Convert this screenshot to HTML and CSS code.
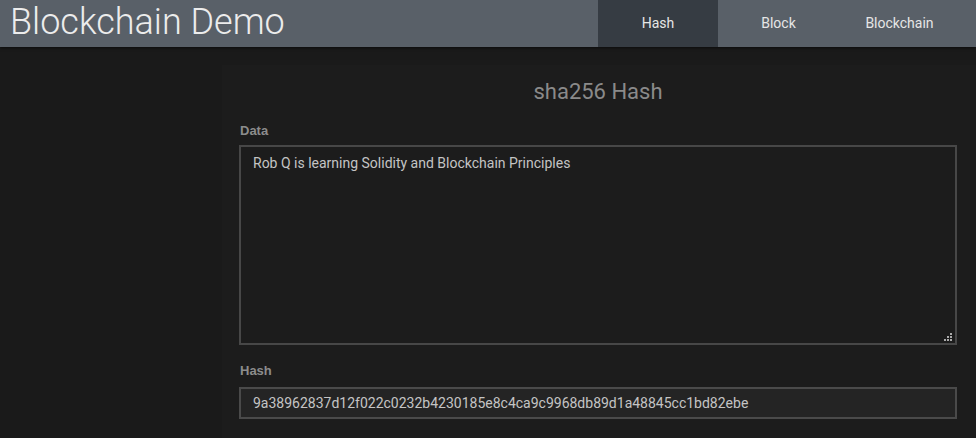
FILE: index.html
```html
<!DOCTYPE html>
<html>
<head>
<meta charset="utf-8">
<title>Blockchain Demo</title>
<link rel="stylesheet" href="styles.css">
</head>
<body>
<header class="topbar">
  <h1 class="brand">Blockchain Demo</h1>
  <nav class="nav">
    <a class="nav-item active">Hash</a>
    <a class="nav-item">Block</a>
    <a class="nav-item">Blockchain</a>
  </nav>
</header>
<main class="page">
  <div class="spacer"></div>
  <section class="card">
    <h2 class="card-title">sha256 Hash</h2>
    <label class="field-label">Data</label>
    <div class="textarea">Rob Q is learning Solidity and Blockchain Principles<span class="grip"><svg width="8" height="8" viewBox="0 0 8 8"><rect x="6" y="0" width="2" height="2" fill="#aaa"/><rect x="3" y="3" width="2" height="2" fill="#aaa"/><rect x="6" y="3" width="2" height="2" fill="#aaa"/><rect x="0" y="6" width="2" height="2" fill="#aaa"/><rect x="3" y="6" width="2" height="2" fill="#aaa"/><rect x="6" y="6" width="2" height="2" fill="#aaa"/></svg></span></div>
    <label class="field-label hash-label">Hash</label>
    <div class="input">9a38962837d12f022c0232b4230185e8c4ca9c9968db89d1a48845cc1bd82ebe</div>
  </section>
</main>
</body>
</html>
```
FILE: styles.css
```css
html, body {
  margin: 0;
  padding: 0;
  background: #1a1a1a;
  font-family: Roboto, "Liberation Sans", sans-serif;
  height: 100%;
  overflow: hidden;
}
.topbar {
  display: flex;
  align-items: stretch;
  height: 47px;
  background: #596068;
  box-shadow: 0 1px 3px rgba(0,0,0,0.6);
  position: relative;
}
.brand {
  margin: 0;
  padding-left: 10px;
  font-weight: 300;
  font-size: 36px;
  line-height: 44px;
  color: #ececec;
  flex: 1;
}
.nav {
  display: flex;
  padding-right: 16px;
}
.nav-item {
  width: 121px;
  display: flex;
  align-items: center;
  justify-content: center;
  font-size: 14px;
  color: #e6e6e6;
  padding-bottom: 2px;
}
.nav-item.active {
  width: 120px;
  background: #363c43;
}
.page {
  display: flex;
  height: calc(100% - 47px);
}
.spacer {
  width: 222px;
  flex: none;
}
.card {
  flex: 1;
  margin-top: 18px;
  background: #1c1c1c;
  padding: 12px 19px 0 17px;
}
.card-title {
  margin: 0 0 16px 0;
  text-align: center;
  font-weight: 400;
  font-size: 22px;
  line-height: 30px;
  color: #8a8a8a;
}
.field-label {
  display: block;
  font-family: "Liberation Sans", Arial, sans-serif;
  font-weight: 700;
  font-size: 13px;
  color: #8c8c8c;
  margin: 0 0 6px 1px;
  line-height: 16px;
}
.hash-label {
  margin-top: 18px;
  margin-bottom: 8px;
}
.textarea {
  position: relative;
  height: 177px;
  border: 2px solid #474747;
  background: #1c1c1c;
  padding: 8px 12px 11px 12px;
  font-size: 14px;
  color: #c4c4c4;
  line-height: 17px;
}
.grip {
  position: absolute;
  right: 3px;
  bottom: 2px;
  line-height: 0;
}
.input {
  height: 28px;
  border: 2px solid #4a4a4a;
  background: #242424;
  padding: 0 12px;
  font-size: 14px;
  color: #c4c4c4;
  line-height: 28px;
}
```
